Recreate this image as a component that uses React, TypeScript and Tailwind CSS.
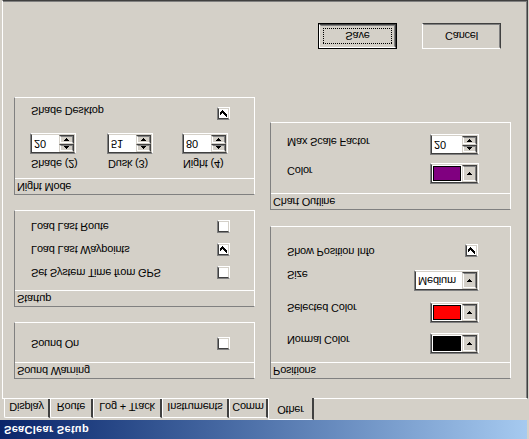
import React from 'react';

const font = "font-['Liberation_Sans',Arial,sans-serif]";

function Sunken({ className = '', inner = '', children }: { className?: string; inner?: string; children?: React.ReactNode }) {
  return (
    <div className={`border border-t-[#808080] border-l-[#808080] border-b-white border-r-white ${className}`}>
      <div className={`h-full w-full border border-t-[#404040] border-l-[#404040] border-b-[#d4d0c8] border-r-[#d4d0c8] ${inner}`}>
        {children}
      </div>
    </div>
  );
}

function Raised({ className = '', children }: { className?: string; children?: React.ReactNode }) {
  return (
    <div className={`border border-t-[#d4d0c8] border-l-[#d4d0c8] border-b-[#404040] border-r-[#404040] ${className}`}>
      <div className="h-full w-full border border-t-white border-l-white border-b-[#808080] border-r-[#808080] bg-[#d4d0c8] flex items-center justify-center">
        {children}
      </div>
    </div>
  );
}

function Arrow({ up = false }: { up?: boolean }) {
  return (
    <svg width="5" height="3" viewBox="0 0 5 3" shapeRendering="crispEdges">
      <path d={up ? 'M2 0h1v1h1v1h1v1H0V2h1V1h1z' : 'M0 0h5v1H4v1H3v1H2V2H1V1H0z'} fill="#000" />
    </svg>
  );
}

function Check({ checked }: { checked?: boolean }) {
  return (
    <Sunken className="w-[13px] h-[13px]" inner="bg-white flex items-center justify-center">
      {checked && (
        <svg width="7" height="7" viewBox="0 0 7 7" shapeRendering="crispEdges">
          <path d="M6 0h1v3H6v1H5v1H4v1H3v1H2V6H1V5H0V2h1v1h1v1h1V3h1V2h1V1h1z" fill="#000" />
        </svg>
      )}
    </Sunken>
  );
}

function Spin({ value, w }: { value: string; w: string }) {
  return (
    <Sunken className={`${w} h-[21px]`} inner="bg-white flex">
      <span className="flex-1 pl-[2px] leading-[17px] text-black">{value}</span>
      <div className="flex flex-col w-[15px] h-full">
        <Raised className="h-[8px]"><Arrow up /></Raised>
        <Raised className="h-[9px]"><Arrow /></Raised>
      </div>
    </Sunken>
  );
}

function ColorCombo({ color }: { color: string }) {
  return (
    <Sunken className="w-[49px] h-[21px]" inner="bg-white flex">
      <div className="flex-1 p-[1px]">
        <div className={`h-full w-full border border-black ${color}`} />
      </div>
      <Raised className="w-[15px] h-full"><Arrow /></Raised>
    </Sunken>
  );
}

function TextCombo({ value }: { value: string }) {
  return (
    <Sunken className="w-[65px] h-[21px]" inner="bg-white flex">
      <span className="flex-1 pl-[2px] leading-[17px] text-black">{value}</span>
      <Raised className="w-[15px] h-full"><Arrow /></Raised>
    </Sunken>
  );
}

function Group({ title, h, children }: { title: string; h: string; children: React.ReactNode }) {
  return (
    <div className={`${h} w-[241px] flex flex-col border border-t-[#808080] border-l-[#808080] border-b-white border-r-white`}>
      <div className="h-[16px] shrink-0 border-b border-white pl-[2px] leading-[15px] text-black">{title}</div>
      <div className="flex-1 flex flex-col">{children}</div>
    </div>
  );
}

function CheckRow({ label, checked, className = '', labelClass = '' }: { label: string; checked?: boolean; className?: string; labelClass?: string }) {
  return (
    <div className={`h-[23px] flex items-center justify-between pl-[16px] pr-[24px] ${className}`}>
      <span className={`text-black ${labelClass}`}>{label}</span>
      <Check checked={checked} />
    </div>
  );
}

function Row({ label, className = '', labelClass = 'pt-[2px]', children }: { label: string; className?: string; labelClass?: string; children: React.ReactNode }) {
  return (
    <div className={`h-[21px] flex items-center justify-between pl-[16px] pr-[31px] ${className}`}>
      <span className={`text-black ${labelClass}`}>{label}</span>
      {children}
    </div>
  );
}

const tabs = [
  { name: 'Display', w: 'w-[46px]' },
  { name: 'Route', w: 'w-[43px]' },
  { name: 'Log + Track', w: 'w-[69px]' },
  { name: 'Instruments', w: 'w-[67px]' },
  { name: 'Comm', w: 'w-[39px]' },
];

export default function App() {
  return (
    <div className={`w-[529px] h-[439px] bg-[#d4d0c8] overflow-hidden -scale-y-100 whitespace-nowrap text-[11px] tracking-[-0.2px] ${font}`}>
      {/* title bar */}
      <div className="w-[527px] h-[19px] bg-gradient-to-r from-[#0a246a] to-[#a6caf0] flex items-center pl-[4px]">
        <span className="text-white font-bold tracking-[0.3px]">SeaClear Setup</span>
      </div>

      {/* tabs */}
      <div className="h-[21px] flex items-end pl-[4px]">
        {tabs.map(t => (
          <div
            key={t.name}
            className={`${t.w} h-[19px] border-t border-l border-white rounded-tl-[2px] border-r-2 border-r-[#404040] flex items-start justify-center pt-[2px] text-black`}
          >
            {t.name}
          </div>
        ))}
        <div className="w-[46px] h-[22px] -mb-[1px] relative z-10 bg-[#d4d0c8] border-t border-l border-white rounded-tl-[2px] border-r-2 border-r-[#404040] flex items-start justify-center pt-[1px] text-black">
          Other
        </div>
      </div>

      {/* panel */}
      <div className="ml-[2px] w-[526px] h-[399px] border-t border-l border-white border-r border-b border-r-[#404040] border-b-[#404040]">
        <div className="h-full w-full border-r border-b border-r-[#808080] border-b-[#808080] flex flex-col">
          <div className="flex pt-[19px] pl-[11px] gap-[15px]">
            <div className="flex flex-col gap-[15px]">
              <Group title="Sound Warning" h="h-[57px]">
                <CheckRow label="Sound On" className="mt-[7px]" />
              </Group>
              <Group title="Startup" h="h-[97px]">
                <div className="pt-[6px] flex flex-col">
                  <CheckRow label="Set System Time from GPS" />
                  <CheckRow label="Load Last Waypoints" checked />
                  <CheckRow label="Load Last Route" />
                </div>
              </Group>
              <Group title="Night Mode" h="h-[98px]">
                <div className="flex mt-[8px]">
                  <div className="ml-[15px] w-[46px] flex flex-col">
                    <span className="pl-[1px] leading-[13px] text-black">Shade (2)</span>
                    <div className="mt-[3px]"><Spin value="20" w="w-[46px]" /></div>
                  </div>
                  <div className="ml-[31px] w-[46px] flex flex-col">
                    <span className="pl-[1px] leading-[13px] text-black">Dusk (3)</span>
                    <div className="mt-[3px]"><Spin value="51" w="w-[46px]" /></div>
                  </div>
                  <div className="ml-[29px] w-[46px] flex flex-col">
                    <span className="pl-[1px] leading-[13px] text-black">Night (4)</span>
                    <div className="mt-[3px]"><Spin value="80" w="w-[46px]" /></div>
                  </div>
                </div>
                <CheckRow label="Shade Desktop" checked className="mt-[8px]" labelClass="pt-[5px]" />
              </Group>
            </div>

            <div className="flex flex-col gap-[16px]">
              <Group title="Positions" h="h-[153px]">
                <Row label="Normal Color" className="mt-[8px]" labelClass="pt-[7px]"><ColorCombo color="bg-black" /></Row>
                <Row label="Selected Color" className="mt-[10px]" labelClass="pt-[10px]"><ColorCombo color="bg-[#ff0000]" /></Row>
                <Row label="Size" className="mt-[11px]" labelClass="pt-[12px]"><TextCombo value="Medium" /></Row>
                <Row label="Show Position Info" className="mt-[9px]" labelClass="pb-[3px]">
                  <div className="mr-[1px]"><Check checked /></div>
                </Row>
              </Group>
              <Group title="Chart Outline" h="h-[88px]">
                <Row label="Color" className="mt-[9px]" labelClass="pt-[5px]"><ColorCombo color="bg-[#800080]" /></Row>
                <Row label="Max Scale Factor" className="mt-[8px]" labelClass="pt-[6px]"><Spin value="20" w="w-[49px]" /></Row>
              </Group>
            </div>
          </div>

          <div className="mt-[48px] pl-[315px] flex gap-[25px]">
            <div className="w-[79px] h-[26px] border border-black">
              <div className="h-full w-full border border-t-white border-l-white border-b-[#404040] border-r-[#404040]">
                <div className="h-full w-full border border-t-[#d4d0c8] border-l-[#d4d0c8] border-b-[#808080] border-r-[#808080] p-[2px]">
                  <div className="h-full w-full border border-dotted border-black flex items-center justify-center text-black">
                    Save
                  </div>
                </div>
              </div>
            </div>
            <div className="w-[79px] h-[26px] border border-t-white border-l-white border-b-[#404040] border-r-[#404040]">
              <div className="h-full w-full border border-t-[#d4d0c8] border-l-[#d4d0c8] border-b-[#808080] border-r-[#808080] flex items-center justify-center text-black">
                Cancel
              </div>
            </div>
          </div>
        </div>
      </div>
    </div>
  );
}
